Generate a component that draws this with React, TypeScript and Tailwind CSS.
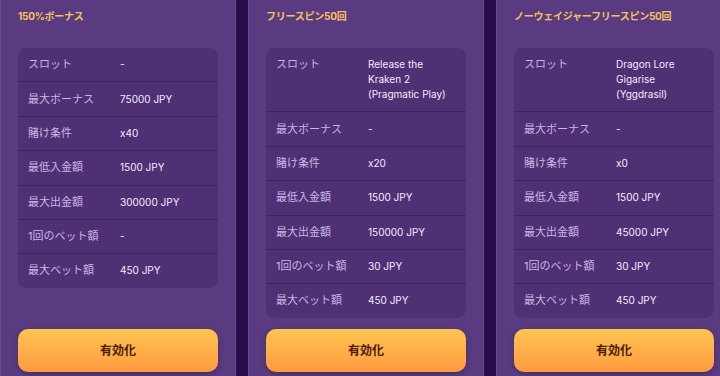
const CARDS = [
  {
    title: "150%ボーナス",
    rows: [
      ["スロット", "-"],
      ["最大ボーナス", "75000 JPY"],
      ["賭け条件", "x40"],
      ["最低入金額", "1500 JPY"],
      ["最大出金額", "300000 JPY"],
      ["1回のベット額", "-"],
      ["最大ベット額", "450 JPY"],
    ],
  },
  {
    title: "フリースピン50回",
    rows: [
      ["スロット", "Release the Kraken 2 (Pragmatic Play)"],
      ["最大ボーナス", "-"],
      ["賭け条件", "x20"],
      ["最低入金額", "1500 JPY"],
      ["最大出金額", "150000 JPY"],
      ["1回のベット額", "30 JPY"],
      ["最大ベット額", "450 JPY"],
    ],
  },
  {
    title: "ノーウェイジャーフリースピン50回",
    rows: [
      ["スロット", "Dragon Lore Gigarise (Yggdrasil)"],
      ["最大ボーナス", "-"],
      ["賭け条件", "x0"],
      ["最低入金額", "1500 JPY"],
      ["最大出金額", "45000 JPY"],
      ["1回のベット額", "30 JPY"],
      ["最大ベット額", "450 JPY"],
    ],
  },
];

export default function App() {
  return (
    <div
      className="w-[720px] h-[376px] overflow-hidden bg-[#280d4a] flex gap-3"
      style={{ fontFamily: "Inter, 'Noto Sans CJK JP', sans-serif" }}
    >
      {CARDS.map((card, i) => (
        <div
          key={i}
          className="w-[236px] shrink-0 h-full flex flex-col bg-[#5a3b82] border-x border-[#664791] px-[17px] pt-[10px] pb-[4px]"
        >
          {/* Title */}
          <div className="text-[10px] font-bold leading-[12px] text-[#f6c15a] tracking-tight">
            {card.title}
          </div>

          {/* Details table */}
          <div className="mt-[26px] rounded-lg bg-[#4f3075] overflow-hidden">
            {card.rows.map(([label, value], j) => (
              <div
                key={j}
                className={`grid grid-cols-[88px_88px] gap-1 px-[10px] py-[9.2px] leading-[15px] ${
                  j < card.rows.length - 1 ? "border-b border-[#3e2262]" : ""
                }`}
              >
                <span className="text-[11px] text-[#c9b6e4]">{label}</span>
                <span className="text-[10px] text-[#f3ecfb]">{value}</span>
              </div>
            ))}
          </div>

          {/* Activate */}
          <button className="mt-auto h-[43px] w-full rounded-[10px] bg-gradient-to-b from-[#ffc452] to-[#ff9a3f] text-[12px] font-bold text-[#4a1d05] shadow-[0_2px_6px_rgba(0,0,0,0.25)]">
            有効化
          </button>
        </div>
      ))}
    </div>
  );
}
